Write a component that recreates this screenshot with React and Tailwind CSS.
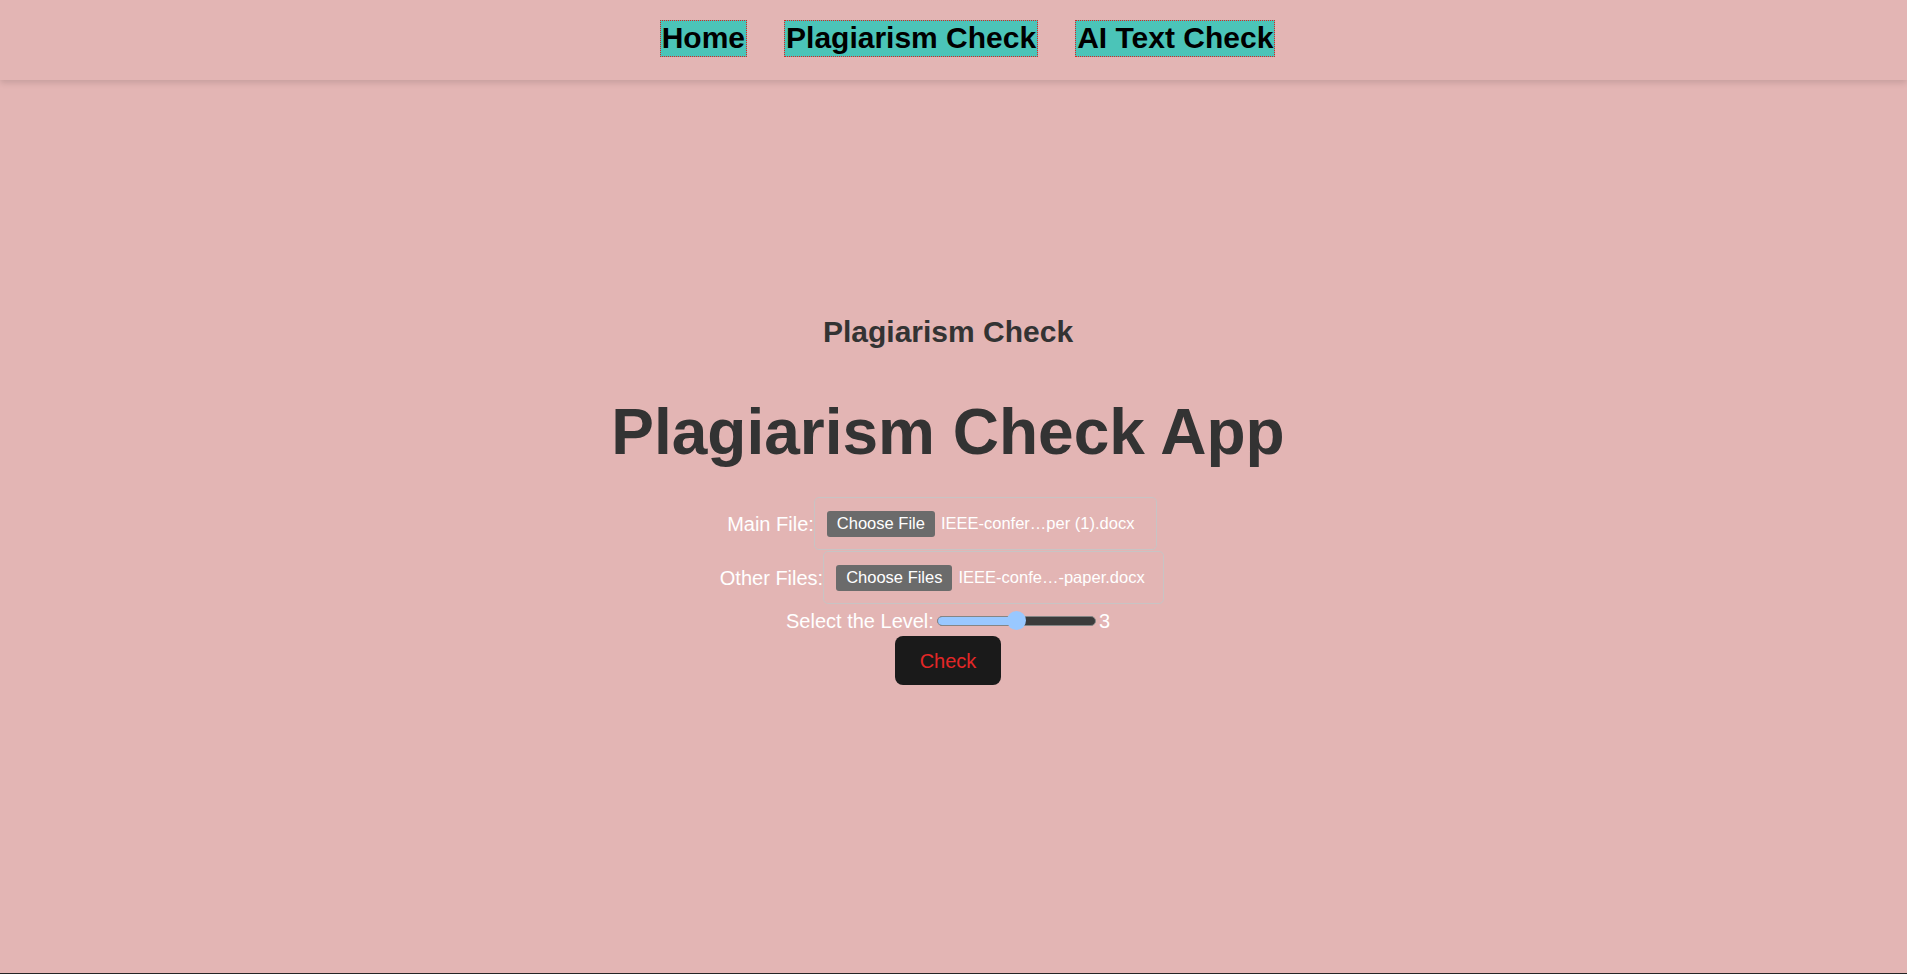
const navItems = ['Home', 'Plagiarism Check', 'AI Text Check'];

function FakeFileInput({ button, fileName, width }) {
  return (
    <div className={`flex items-center h-[53px] px-3 border border-[#c8c4c4] rounded-[5px] text-[16.5px] text-white ${width}`}>
      <span className="h-[26px] px-[10px] flex items-center bg-[#6b6b6b] rounded-[3px] text-white">{button}</span>
      <span className="ml-[6px] whitespace-nowrap">{fileName}</span>
    </div>
  );
}

function LevelSlider({ value, min = 1, max = 5 }) {
  const pct = ((value - min) / (max - min)) * 100;
  return (
    <div className="relative mx-[3px] w-[159px] h-[19px] flex items-center">
      <div className="w-full h-[10px] rounded-full bg-[#3b3b3b] border border-[#858585] overflow-hidden">
        <div className="h-full bg-[#99c8ff]" style={{ width: `${pct}%` }} />
      </div>
      <div
        className="absolute top-0 w-[19px] h-[19px] rounded-full bg-[#99c8ff]"
        style={{ left: `calc(${pct}% - 9.5px)` }}
      />
    </div>
  );
}

export default function App() {
  const level = 3;

  return (
    <div className="min-h-screen bg-[#242424] font-['Liberation_Sans',Arial,sans-serif]">
      <div className="h-[973px] bg-[#e3b5b4] flex flex-col">
        <nav className="h-[80px] shrink-0 bg-[#e3b5b4] shadow-[0_3px_6px_rgba(0,0,0,0.12)] flex justify-center items-start pt-[20px] pl-[28px] gap-[37px]">
          {navItems.map((item) => (
            <a key={item} href="#" className="px-[1px] bg-[#4bc4b8] border border-dotted border-[#e02020] text-black text-[30px] font-bold leading-[1.15]">
              {item}
            </a>
          ))}
        </nav>

        <main className="flex flex-col items-center pt-[235px] pr-[11px] text-white">
          <h2 className="text-[30px] font-bold leading-[1.15] text-[#333]">Plagiarism Check</h2>
          <h1 className="mt-[46px] text-[64px] font-bold leading-[1.15] text-[#333]">Plagiarism Check App</h1>

          <div className="mt-[28px] mr-[12px] flex items-center text-[20px]">
            <label>Main File:</label>
            <FakeFileInput button="Choose File" fileName="IEEE-confer…per (1).docx" width="w-[343px]" />
          </div>
          <div className="mt-[1px] mr-[12px] flex items-center text-[20px]">
            <label>Other Files:</label>
            <FakeFileInput button="Choose Files" fileName="IEEE-confe…-paper.docx" width="w-[341px]" />
          </div>

          <div className="mt-[5px] h-[23px] flex items-center text-[20px]">
            <label>Select the Level:</label>
            <LevelSlider value={level} />
            <span>{level}</span>
          </div>

          <button className="mt-[4px] h-[49px] px-[24px] rounded-[8px] bg-[#1a1a1a] text-[#e32727] text-[20px] border border-transparent">
            Check
          </button>
        </main>
      </div>
    </div>
  );
}
